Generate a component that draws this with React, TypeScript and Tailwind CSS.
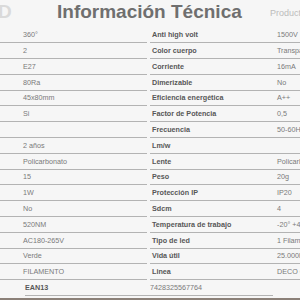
const left = [
  '360°',
  '2',
  'E27',
  '80Ra',
  '45x80mm',
  'Si',
  '',
  '2 años',
  'Policarbonato',
  '15',
  '1W',
  'No',
  '520NM',
  'AC180-265V',
  'Verde',
  'FILAMENTO',
]

const right: [string, string][] = [
  ['Anti high volt', '1500V'],
  ['Color cuerpo', 'Transparente'],
  ['Corriente', '16mA'],
  ['Dimerizable', 'No'],
  ['Eficiencia energética', 'A++'],
  ['Factor de Potencia', '0,5'],
  ['Frecuencia', '50-60Hz'],
  ['Lm/w', ''],
  ['Lente', 'Policarbonato'],
  ['Peso', '20g'],
  ['Protección IP', 'IP20'],
  ['Sdcm', '4'],
  ['Temperatura de trabajo', '-20° +40°'],
  ['Tipo de led', '1 Filamento'],
  ['Vida útil', '25.000h'],
  ['Linea', 'DECO GOLD'],
]

export default function App() {
  return (
    <main
      className="w-[300px] h-[300px] overflow-hidden bg-[#f6f6f6] text-[7.2px] leading-none"
      style={{ fontFamily: '"Liberation Sans", Arial, sans-serif' }}
    >
      {/* header */}
      <div className="h-[27.5px] flex items-start relative">
        <span className="absolute left-[-2px] top-[2px] text-[19px] font-bold text-[#dadada]">D</span>
        <h1 className="ml-[57px] mt-[2px] text-[19px] font-bold text-[#6f6f6f] whitespace-nowrap">
          Información Técnica
        </h1>
        <span className="absolute left-[270px] top-[9px] text-[9px] text-[#bcbcbc] whitespace-nowrap">Producto</span>
      </div>

      <div className="flex gap-[3px]">
        <div className="w-[147px] shrink-0">
          {left.map((v, i) => (
            <div
              key={i}
              className="h-[15.8px] flex items-center pl-[23px] border-b border-[#b3b3b3] text-[#7a7a7a]"
            >
              {v}
            </div>
          ))}
        </div>
        <div className="w-[150px] shrink-0">
          {right.map(([k, v]) => (
            <div
              key={k}
              className="h-[15.8px] flex items-center pl-[2px] border-b border-[#b3b3b3] whitespace-nowrap overflow-hidden"
            >
              <span className="w-[125px] shrink-0 font-bold text-[#575757]">{k}</span>
              <span className="text-[#7a7a7a]">{v}</span>
            </div>
          ))}
        </div>
      </div>

      <div className="ml-[25px] w-[248px] h-[15.8px] flex items-center border-b border-[#b3b3b3]">
        <span className="w-[125px] shrink-0 font-bold text-[#575757]">EAN13</span>
        <span className="text-[#7a7a7a]">7428325567764</span>
      </div>
      <div className="mt-[2px] h-[3px] bg-[#8b8078]" />
    </main>
  )
}
